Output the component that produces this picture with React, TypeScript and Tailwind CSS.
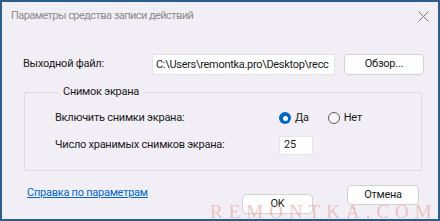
import React from 'react';

function Radio({ checked, label }: { checked: boolean; label: string }) {
  return (
    <div className="flex items-center gap-[4px]">
      {checked ? (
        <span className="w-[12px] h-[12px] rounded-full bg-[#0067c0] flex items-center justify-center">
          <span className="w-[5px] h-[5px] rounded-full bg-white" />
        </span>
      ) : (
        <span className="w-[12px] h-[12px] rounded-full border border-[#5a5a5a] bg-[#f7f6f9]" />
      )}
      <span>{label}</span>
    </div>
  );
}

export default function App() {
  return (
    <div
      className="relative w-[440px] h-[221px] border-2 border-[#2d5e8b] bg-[#f1eff5] text-[11px] tracking-[-0.25px] leading-[16px] text-[#1a1a1a] flex flex-col overflow-hidden"
      style={{ fontFamily: 'Roboto, "Noto Sans", sans-serif' }}
    >
      {/* title bar */}
      <div className="h-[28px] shrink-0 flex items-center justify-between pl-[9px] pr-[9px]">
        <span className="text-[#8c8c8c] text-[11px] tracking-[-0.55px]">Параметры средства записи действий</span>
        <svg width="11" height="11" viewBox="0 0 11 11" className="text-[#777]">
          <path d="M0.5 0.5 L10.5 10.5 M10.5 0.5 L0.5 10.5" stroke="currentColor" strokeWidth="1" />
        </svg>
      </div>

      {/* output file row */}
      <div className="mt-[23px] shrink-0 flex items-center pl-[21px] h-[22px]">
        <span className="w-[129px]">Выходной файл:</span>
        <div className="w-[183px] h-[21px] bg-white border border-[#e3e3e3] pl-[3px] overflow-hidden">
          <div className="w-[177px] overflow-hidden whitespace-nowrap leading-[19px] tracking-[-0.3px]">C:\Users\remontka.pro\Desktop\recc</div>
        </div>
        <button className="ml-[9px] w-[80px] h-[21px] rounded-[4px] bg-[#fdfdfd] border border-[#d2d2d2] flex items-center justify-center">
          Обзор...
        </button>
      </div>

      {/* screenshot group */}
      <fieldset className="mt-[9px] shrink-0 ml-[22px] mr-[16px] border border-[#dcdcdc] rounded-[2px] pl-[30px] pb-[15px]">
        <legend className="ml-[4px] px-[4px]">Снимок экрана</legend>
        <div className="mt-[8px] flex items-center h-[20px]">
          <span className="w-[224px]">Включить снимки экрана:</span>
          <div className="flex items-center gap-[19px]">
            <Radio checked label="Да" />
            <Radio checked={false} label="Нет" />
          </div>
        </div>
        <div className="mt-[7px] flex items-center h-[20px]">
          <span className="w-[224px]">Число хранимых снимков экрана:</span>
          <div className="w-[34px] h-[19px] bg-white border border-[#e6e6e6] flex items-center pl-[4px]">25</div>
        </div>
      </fieldset>

      {/* bottom row */}
      <div className="mt-[14px] shrink-0 h-[34px] flex items-start pl-[25px] pr-[19px]">
        <a href="#" className="text-[#0066cc] underline">
          Справка по параметрам
        </a>
        <div className="ml-auto pt-[9px]">
          <button className="w-[71px] h-[20px] rounded-[4px] bg-[#fdfdfd] border border-[#d2d2d2] flex items-center justify-center">
            OK
          </button>
        </div>
        <button className="ml-[34px] w-[72px] h-[20px] rounded-[4px] bg-[#fdfdfd] border border-[#d2d2d2] flex items-center justify-center">
          Отмена
        </button>
      </div>

      {/* watermark */}
      <div
        className="absolute left-[208px] top-[200px] text-[19px] leading-[20px] tracking-[6px] text-[#e8b0b0] opacity-70 pointer-events-none"
        style={{ fontFamily: '"Liberation Serif", serif' }}
      >
        REMONTKA.COM
      </div>
    </div>
  );
}
